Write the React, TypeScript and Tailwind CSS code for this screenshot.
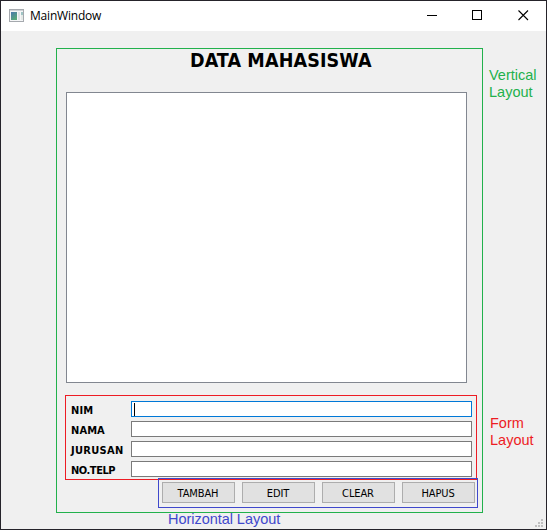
const fields = [
  { label: 'NIM', spacing: 'tracking-[0.1px]' },
  { label: 'NAMA', spacing: 'tracking-[0.1px]' },
  { label: 'JURUSAN', spacing: 'tracking-[0.3px]' },
  { label: 'NO.TELP', spacing: 'tracking-[-0.45px]' },
];
const buttons = ['TAMBAH', 'EDIT', 'CLEAR', 'HAPUS'];

const tahoma = "font-['DejaVu_Sans_Condensed','DejaVu_Sans',sans-serif]";
const arial = "font-['Liberation_Sans',Arial,sans-serif]";

function AppIcon() {
  return (
    <svg width="16" height="14" viewBox="0 0 16 14" shapeRendering="crispEdges">
      <defs>
        <linearGradient id="pane" x1="0" y1="0" x2="0.6" y2="1">
          <stop offset="0" stopColor="#4a78ad" />
          <stop offset="1" stopColor="#58a878" />
        </linearGradient>
      </defs>
      <rect x="0.5" y="0.5" width="14" height="12" fill="#f5f6f7" stroke="#a5a9ae" />
      <rect x="1" y="1" width="13" height="1" fill="#cfd2d6" />
      <rect x="2" y="3" width="6" height="8" fill="url(#pane)" />
      <rect x="9" y="3" width="2" height="8" fill="#dfe3e6" />
      <rect x="12" y="3" width="2" height="3" fill="#9fc4c4" />
      <rect x="12" y="6" width="2" height="5" fill="#e4e9e6" />
    </svg>
  );
}

function TitleBar() {
  return (
    <header className="flex h-[30px] shrink-0 items-center bg-white">
      <div className="ml-2 -mt-px"><AppIcon /></div>
      <span className="ml-[5px] font-['Open_Sans','Noto_Sans',sans-serif] text-[12px] leading-4 tracking-[-0.2px] text-black">MainWindow</span>
      <div className="-mr-px ml-auto flex h-full">
        <svg width="46" height="30" shapeRendering="crispEdges"><path d="M18 14.5h10" stroke="#000" /></svg>
        <svg width="46" height="30" shapeRendering="crispEdges"><rect x="17.5" y="9.5" width="9" height="9" fill="none" stroke="#000" /></svg>
        <svg width="46" height="30"><path d="M17.5 9.5l9.5 9.5M27 9.5l-9.5 9.5" stroke="#000" strokeWidth="1.1" /></svg>
      </div>
    </header>
  );
}

function Grip() {
  return (
    <svg className="absolute right-[3px] bottom-0.5" width="8" height="8" fill="#bfbfbf" shapeRendering="crispEdges">
      <path d="M6 0h2v2h-2zM3 3h2v2h-2zM6 3h2v2h-2zM0 6h2v2h-2zM3 6h2v2h-2zM6 6h2v2h-2z" />
    </svg>
  );
}

export default function App() {
  return (
    <div className="relative flex h-[530px] w-[547px] flex-col overflow-hidden border border-[#25232a] bg-[#f0f0f0]">
      <TitleBar />
      <main className="flex pt-[17px] pl-[55px]">
        <section className="h-[465px] w-[427px] shrink-0 border border-[#22b14c]">
          <h1 className={`${tahoma} h-[43px] pl-[133px] text-[19.5px] leading-[23px] font-bold tracking-[0.12px] whitespace-nowrap text-black`}>
            DATA MAHASISWA
          </h1>
          <div className="ml-[9px] h-[291px] w-[401px] border border-[#828790] bg-white" />
          <div className="mt-3 ml-2 flex h-[85px] w-[412px] flex-col gap-1 border border-[#ed1c24] pt-[5px] pr-1 pl-[5px]">
            {fields.map(({ label, spacing }, i) => (
              <label key={label} className="flex h-4">
                <span className={`${tahoma} ${spacing} w-[60px] shrink-0 text-[11px] leading-[20px] font-bold whitespace-nowrap text-black`}>{label}</span>
                <span className={`flex h-4 flex-1 border bg-white ${i === 0 ? 'border-[#0078d7]' : 'border-[#7a7a7a]'}`}>
                  {i === 0 && <span className="mt-px ml-0.5 h-[13px] w-px bg-black" />}
                </span>
              </label>
            ))}
          </div>
          <div className="relative -mt-0.5 ml-[101px] flex h-[30px] w-80 gap-[7px] border border-[#3f48cc] py-[3px] pr-0.5 pl-[3px]">
            {buttons.map((b) => (
              <button key={b} className={`${tahoma} h-[21px] w-[73px] shrink-0 border border-[#adadad] bg-[#e1e1e1] pt-px pr-px text-center text-[11px] leading-[20px] tracking-[-0.1px] text-black`}>
                {b}
              </button>
            ))}
          </div>
        </section>
        <aside className={`${arial} ml-1.5 text-[14.5px] leading-[17px]`}>
          <p className="pt-[19px] text-[#22b14c]">Vertical<br />Layout</p>
          <p className="ml-px pt-[314px] text-[#ed1c24]">Form<br />Layout</p>
        </aside>
      </main>
      <p className={`${arial} -mt-0.5 ml-[167px] text-[14.5px] leading-[17px] tracking-[-0.04px] text-[#3f48cc]`}>Horizontal Layout</p>
      <Grip />
    </div>
  );
}
